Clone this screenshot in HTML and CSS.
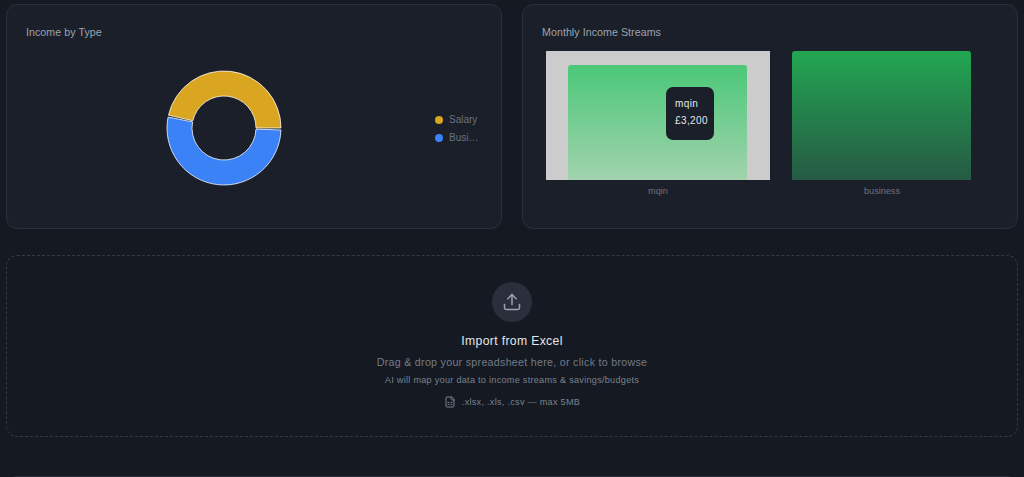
FILE: index.html
```html
<!DOCTYPE html>
<html>
  <head>
    <meta charset="utf-8">
    <title>Income</title>
    <link rel="stylesheet" href="styles.css">
  </head>
  <body>
    <main class="page">
      <section class="charts">
        <div class="card">
          <h3 class="card_title">Income by Type</h3>
          <div class="donut_wrap">
            <svg class="donut" viewBox="26 51 396 154" width="396" height="154">
              <path fill="#daa520" stroke="#fff" stroke-width="0.76" d="M281 128 A57 57 0 0 0 168.46 115.18 L192.82 120.8 A32 32 0 0 1 256 128 Z"/>
              <path fill="#3b82f6" stroke="#fff" stroke-width="0.76" d="M168.05 117.12 A57 57 0 1 0 280.97 129.99 L255.98 129.12 A32 32 0 1 1 192.59 121.9 Z"/>
            </svg>
            <ul class="legend">
              <li class="legend_item"><span class="dot dot_salary"></span><span class="legend_text">Salary</span></li>
              <li class="legend_item"><span class="dot dot_business"></span><span class="legend_text">Business</span></li>
            </ul>
          </div>
        </div>
        <div class="card">
          <h3 class="card_title">Monthly Income Streams</h3>
          <div class="bars">
            <div class="bar_col">
              <div class="plot plot_active">
                <div class="bar bar_main"></div>
                <div class="tooltip">
                  <p>mqin</p>
                  <p>£3,200</p>
                </div>
              </div>
              <span class="bar_label">mqin</span>
            </div>
            <div class="bar_col">
              <div class="plot">
                <div class="bar bar_business"></div>
              </div>
              <span class="bar_label">business</span>
            </div>
          </div>
        </div>
      </section>

      <section class="dropzone">
        <div class="upload_circle">
          <svg width="20" height="20" viewBox="0 0 24 24" fill="none" stroke="#9ca3af" stroke-width="1.8" stroke-linecap="round" stroke-linejoin="round">
            <path d="M21 15v4a2 2 0 0 1-2 2H5a2 2 0 0 1-2-2v-4"/>
            <polyline points="17 8 12 3 7 8"/>
            <line x1="12" y1="3" x2="12" y2="15"/>
          </svg>
        </div>
        <h3 class="drop_title">Import from Excel</h3>
        <p class="drop_text">Drag &amp; drop your spreadsheet here, or click to browse</p>
        <p class="drop_sub">AI will map your data to income streams &amp; savings/budgets</p>
        <p class="drop_formats">
          <svg width="12" height="12" viewBox="0 0 24 24" fill="none" stroke="#7b818d" stroke-width="2" stroke-linecap="round" stroke-linejoin="round">
            <path d="M15 2H6a2 2 0 0 0-2 2v16a2 2 0 0 0 2 2h12a2 2 0 0 0 2-2V7Z"/>
            <path d="M14 2v4a2 2 0 0 0 2 2h4"/>
            <path d="M8 13h2"/>
            <path d="M14 13h2"/>
            <path d="M8 17h2"/>
            <path d="M14 17h2"/>
          </svg>
          <span>.xlsx, .xls, .csv — max 5MB</span>
        </p>
      </section>

      <section class="card next_card"></section>
    </main>
  </body>
</html>
```

FILE: styles.css
```css
* {
  margin: 0;
  padding: 0;
  box-sizing: border-box;
}

html, body {
  height: 100%;
  overflow: hidden;
}

body {
  background-color: #141922;
  color: #e5e7eb;
  font-family: "Liberation Sans", Arial, sans-serif;
}

.page {
  padding: 4px 6px;
}

.charts {
  display: grid;
  grid-template-columns: 1fr 1fr;
  gap: 20px;
}

.card {
  background-color: #1a1f29;
  border: 1px solid #2a303b;
  border-radius: 11px;
  height: 225px;
  padding: 20px 19px;
}

.card_title {
  color: #9ca3af;
  font-size: 10.67px;
  font-weight: 400;
  letter-spacing: 0.05px;
  line-height: 15px;
}

.donut_wrap {
  display: flex;
  align-items: center;
  gap: 13px;
  margin-top: 11px;
}

.donut {
  display: block;
  flex-shrink: 0;
}

.legend {
  list-style-type: none;
  display: flex;
  flex-direction: column;
  gap: 6px;
  padding-top: 2px;
}

.legend_item {
  display: flex;
  align-items: center;
  gap: 6px;
  height: 12px;
}

.dot {
  width: 8px;
  height: 8px;
  border-radius: 50%;
  flex-shrink: 0;
}

.dot_salary {
  background-color: #daa520;
}

.dot_business {
  background-color: #3b82f6;
}

.legend_text {
  color: #6b7280;
  font-size: 10px;
  line-height: 12px;
  width: 30px;
  overflow: hidden;
  white-space: nowrap;
  text-overflow: ellipsis;
}

.bars {
  display: grid;
  grid-template-columns: 224px 224px;
  margin-top: 11px;
  padding-left: 4px;
}

.bar_col {
  display: flex;
  flex-direction: column;
  align-items: center;
}

.plot {
  position: relative;
  display: flex;
  align-items: flex-end;
  justify-content: center;
  width: 100%;
  height: 129px;
}

.plot_active {
  background-color: #cccccc;
}

.bar {
  width: 179px;
  margin-left: -1px;
  border-radius: 3px 3px 0 0;
}

.bar_main {
  height: 115px;
  background: linear-gradient(to bottom, #4ac878, #a2d3ae);
}

.bar_business {
  height: 129px;
  background: linear-gradient(to bottom, #22a652, #265a44);
}

.bar_label {
  color: #6b7280;
  font-size: 9.14px;
  line-height: 12px;
  margin-top: 5px;
}

.tooltip {
  position: absolute;
  left: 120px;
  top: 36px;
  width: 48px;
  height: 53px;
  padding: 11px 9px;
  background-color: #1a1f29;
  border-radius: 7px;
  font-size: 10px;
  letter-spacing: 0.4px;
  line-height: 12px;
}

.tooltip p + p {
  margin-top: 5px;
}

.dropzone {
  display: flex;
  flex-direction: column;
  align-items: center;
  height: 182px;
  margin-top: 26px;
  padding-top: 26px;
  border: 1.5px dashed #343a46;
  border-radius: 11px;
}

.upload_circle {
  display: flex;
  align-items: center;
  justify-content: center;
  width: 40px;
  height: 40px;
  border-radius: 50%;
  background-color: #2a2f3b;
}

.drop_title {
  margin-top: 11px;
  font-size: 12.19px;
  font-weight: 400;
  letter-spacing: 0.35px;
  line-height: 16px;
}

.drop_text {
  margin-top: 6px;
  color: #757b87;
  font-size: 10.67px;
  letter-spacing: 0.29px;
  line-height: 14px;
}

.drop_sub {
  margin-top: 5px;
  color: #7b818d;
  font-size: 9.14px;
  letter-spacing: 0.27px;
  line-height: 12px;
}

.drop_formats {
  display: flex;
  align-items: center;
  gap: 6px;
  margin-top: 10px;
  color: #7b818d;
  font-size: 9.14px;
  letter-spacing: 0.27px;
  line-height: 12px;
}

.next_card {
  margin-top: 39px;
}
```
